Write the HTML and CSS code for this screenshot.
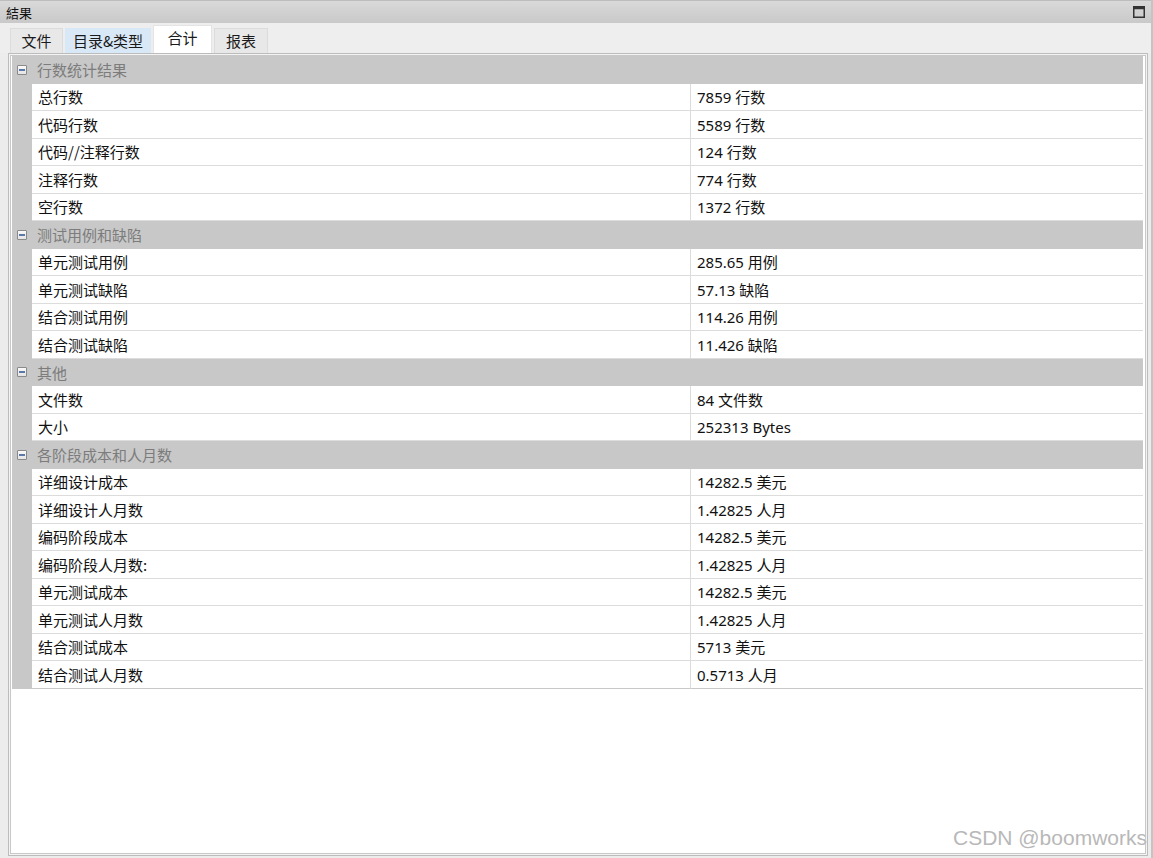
FILE: index.html
```html
<!DOCTYPE html>
<html lang="zh">
<head>
<meta charset="utf-8">
<title>結果</title>
<link rel="stylesheet" href="styles.css">
</head>
<body>
<div class="window">
  <div class="titlebar">
    <span class="title">結果</span>
    <svg class="max-icon" width="12" height="12" viewBox="0 0 12 12"><rect x="0.75" y="0.75" width="10.5" height="10.5" fill="none" stroke="#333" stroke-width="1.5"/><rect x="0.75" y="0.75" width="10.5" height="2.5" fill="#333"/></svg>
  </div>
  <div class="tabs">
    <div class="tab">文件</div>
    <div class="tab hover">目录&amp;类型</div>
    <div class="tab active">合计</div>
    <div class="tab">报表</div>
  </div>
  <div class="panel">
    <div class="inner">
      <div class="grid">
        <div class="row group"><div class="gutter"><span class="toggle"></span></div><div class="gname">行数统计结果</div></div>
        <div class="row"><div class="gutter"></div><div class="name">总行数</div><div class="value">7859 行数</div></div>
        <div class="row"><div class="gutter"></div><div class="name">代码行数</div><div class="value">5589 行数</div></div>
        <div class="row"><div class="gutter"></div><div class="name">代码//注释行数</div><div class="value">124 行数</div></div>
        <div class="row"><div class="gutter"></div><div class="name">注释行数</div><div class="value">774 行数</div></div>
        <div class="row"><div class="gutter"></div><div class="name">空行数</div><div class="value">1372 行数</div></div>
        <div class="row group"><div class="gutter"><span class="toggle"></span></div><div class="gname">测试用例和缺陷</div></div>
        <div class="row"><div class="gutter"></div><div class="name">单元测试用例</div><div class="value">285.65 用例</div></div>
        <div class="row"><div class="gutter"></div><div class="name">单元测试缺陷</div><div class="value">57.13 缺陷</div></div>
        <div class="row"><div class="gutter"></div><div class="name">结合测试用例</div><div class="value">114.26 用例</div></div>
        <div class="row"><div class="gutter"></div><div class="name">结合测试缺陷</div><div class="value">11.426 缺陷</div></div>
        <div class="row group"><div class="gutter"><span class="toggle"></span></div><div class="gname">其他</div></div>
        <div class="row"><div class="gutter"></div><div class="name">文件数</div><div class="value">84 文件数</div></div>
        <div class="row"><div class="gutter"></div><div class="name">大小</div><div class="value">252313 Bytes</div></div>
        <div class="row group"><div class="gutter"><span class="toggle"></span></div><div class="gname">各阶段成本和人月数</div></div>
        <div class="row"><div class="gutter"></div><div class="name">详细设计成本</div><div class="value">14282.5 美元</div></div>
        <div class="row"><div class="gutter"></div><div class="name">详细设计人月数</div><div class="value">1.42825 人月</div></div>
        <div class="row"><div class="gutter"></div><div class="name">编码阶段成本</div><div class="value">14282.5 美元</div></div>
        <div class="row"><div class="gutter"></div><div class="name">编码阶段人月数:</div><div class="value">1.42825 人月</div></div>
        <div class="row"><div class="gutter"></div><div class="name">单元测试成本</div><div class="value">14282.5 美元</div></div>
        <div class="row"><div class="gutter"></div><div class="name">单元测试人月数</div><div class="value">1.42825 人月</div></div>
        <div class="row"><div class="gutter"></div><div class="name">结合测试成本</div><div class="value">5713 美元</div></div>
        <div class="row"><div class="gutter"></div><div class="name">结合测试人月数</div><div class="value">0.5713 人月</div></div>
      </div>
    </div>
  </div>
  <div class="watermark">CSDN @boomworks</div>
</div>
</body>
</html>
```

FILE: styles.css
```css
html, body {
  margin: 0;
  padding: 0;
  height: 100%;
}
body {
  background: #ececec;
  font-family: "Noto Sans", "Noto Sans CJK SC", sans-serif;
  color: #1a1a1a;
}
.window {
  position: relative;
  height: 858px;
  display: flex;
  flex-direction: column;
  border-right: 2px solid #c4c4c4;
  box-sizing: border-box;
}
.titlebar {
  height: 23px;
  flex: none;
  display: flex;
  align-items: center;
  justify-content: space-between;
  padding: 0 6px 0 6px;
  background: linear-gradient(#d9d9d9, #c9c9c9);
  border-top: 1px solid #bdbdbd;
  box-sizing: border-box;
}
.title {
  font-family: "Noto Sans CJK TC", "Noto Sans CJK SC", sans-serif;
  font-size: 13px;
  color: #111;
  line-height: 1;
}
.max-icon {
  display: block;
}
.tabs {
  height: 30px;
  flex: none;
  display: flex;
  align-items: flex-end;
  padding-left: 10px;
  gap: 2px;
  background: #eeeeee;
}
.tab {
  height: 25px;
  padding: 0 0 2px 0;
  display: flex;
  align-items: center;
  justify-content: center;
  font-family: "Noto Sans CJK SC", sans-serif;
  font-size: 15px;
  color: #1a1a1a;
  background: #e8e8e8;
  border: 1px solid #dcdcdc;
  border-bottom: none;
  box-sizing: border-box;
  white-space: nowrap;
}
.tab:first-child { width: 53px; }
.tab.hover {
  background: #d9e8f6;
  border-color: #d9e8f6;
  width: 86px;
}
.tab.active {
  height: 28px;
  width: 59px;
  padding-bottom: 4px;
  background: #ffffff;
  border-color: #e4e4e4;
}
.tab:last-child { width: 54px; }
.panel {
  flex: 1;
  margin: 0 3px 2px 8px;
  border: 1px solid #bcbcbc;
  background: #f4f4f4;
  padding: 1px;
  display: flex;
}
.inner {
  flex: 1;
  background: #ffffff;
  border: 1px solid #c8c8c8;
  padding: 0 2px 0 1px;
}
.grid {
  display: flex;
  flex-direction: column;
}
.row {
  height: 27.5px;
  display: flex;
  box-sizing: border-box;
}
.gutter {
  width: 20px;
  flex: none;
  background: #c8c8c8;
  display: flex;
  align-items: center;
  justify-content: center;
}
.name, .value {
  display: flex;
  align-items: center;
  font-size: 15px;
  border-bottom: 1px solid #dcdcdc;
  box-sizing: border-box;
  color: #111;
  white-space: nowrap;
}
.name {
  width: 659px;
  flex: none;
  padding-left: 6px;
  border-right: 1px solid #dcdcdc;
  font-family: "Noto Sans CJK SC", sans-serif;
}
.value {
  flex: 1;
  padding-left: 6px;
}
.row:last-child .name, .row:last-child .value {
  border-bottom: 1px solid #c8c8c8;
}
.group .gutter {
  justify-content: flex-start;
  padding-left: 5px;
  box-sizing: border-box;
}
.gname {
  flex: 1;
  background: #c8c8c8;
  display: flex;
  align-items: center;
  padding-left: 5px;
  font-family: "Noto Sans CJK SC", sans-serif;
  font-size: 15px;
  color: #7c7c7c;
}
.toggle {
  position: relative;
  width: 10px;
  height: 10px;
  box-sizing: border-box;
  border: 1px solid #8a8a8a;
  background: linear-gradient(#fafafa, #e4e4e4);
  border-radius: 1px;
}
.toggle::after {
  content: "";
  position: absolute;
  left: 1px;
  right: 1px;
  top: 3px;
  height: 2px;
  background: #5a78a8;
}
.watermark {
  position: absolute;
  right: 4px;
  bottom: 8px;
  font-family: "Liberation Sans", Arial, sans-serif;
  font-size: 21px;
  color: #b8b8b8;
  text-shadow: 0 0 1px #ffffff;
}
```
